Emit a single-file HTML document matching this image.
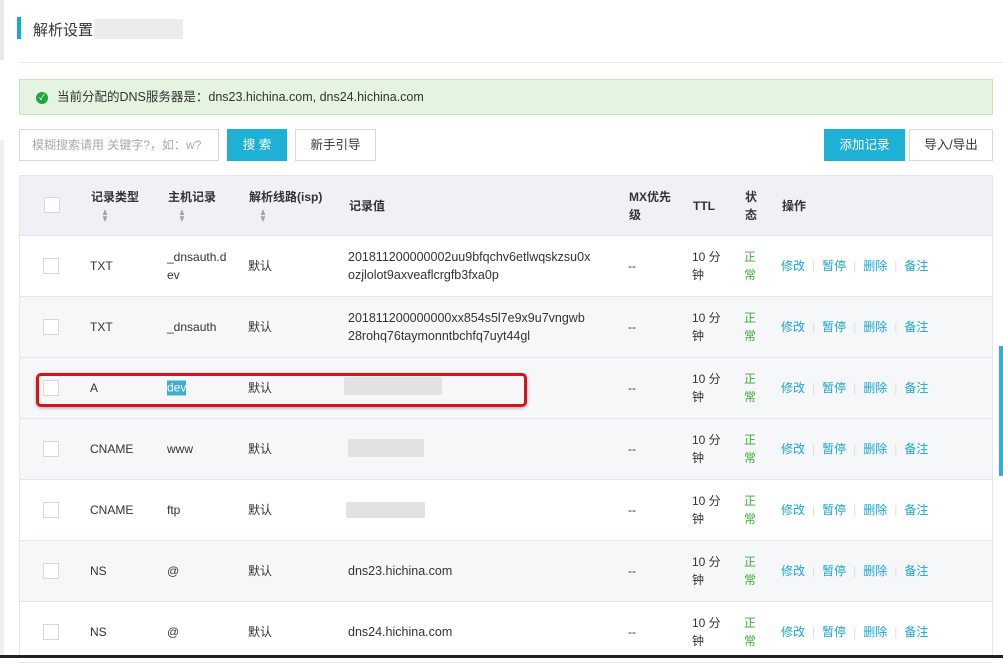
<!DOCTYPE html>
<html><head><meta charset="utf-8"><style>
*{box-sizing:border-box;margin:0;padding:0}
body{width:1003px;height:658px;overflow:hidden;background:#fff;font-family:"Liberation Sans","Noto Sans CJK SC",sans-serif;font-size:12px;color:#333;position:relative}
.abs{position:absolute}
.row{position:absolute;left:19px;width:974px;height:61px;border-bottom:1px solid #e3e6eb}
.cell{position:absolute;top:50%;transform:translateY(-50%);line-height:18px}
.cb{position:absolute;left:24px;top:22px;width:16px;height:16px;border:1px solid #d5d8dc;background:#fff}
.op{color:#1ba8ce}
.sep{color:#dcdfe3;margin:0 7px}
.blur{position:absolute;background:#e2e2e2;height:18px;border-radius:2px}
.sort{color:#a0a4aa;font-size:10px;line-height:7px;margin-left:10px;margin-top:4px;transform:scaleX(.8);transform-origin:left}
</style></head><body>
<div class="abs" style="left:0;top:0;width:4px;height:60px;background:#e8eaee"></div>
<div class="abs" style="left:0;top:140px;width:4px;height:518px;background:#eef0f3"></div>
<div class="abs" style="left:17px;top:17px;width:4px;height:22px;background:#1aa9d4"></div>
<div class="abs" style="left:33px;top:19px;font-size:15px;color:#333">解析设置</div>
<div class="abs" style="left:94px;top:19px;width:89px;height:20px;background:#ececec"></div>
<div class="abs" style="left:19px;top:62px;width:984px;height:1px;background:#e6e8eb"></div>
<div class="abs" style="left:19px;top:79px;width:974px;height:36px;background:#e5f3e1;border:1px solid #c7e5be"></div>
<div class="abs" style="left:36px;top:92px;width:12px;height:12px;border-radius:50%;background:#22a53e;color:#fff;font-size:8px;line-height:12px;text-align:center">✓</div>
<div class="abs" style="left:57px;top:88px;font-size:12.5px;color:#333;line-height:18px">当前分配的DNS服务器是：dns23.hichina.com, dns24.hichina.com</div>
<div class="abs" style="left:19px;top:129px;width:200px;height:32px;border:1px solid #d5d8dc;padding-left:12px;line-height:30px;color:#aaa">模糊搜索请用 关键字?，如：w?</div>
<div class="abs" style="left:227px;top:129px;width:60px;height:32px;background:#1fb0d6;color:#fff;text-align:center;line-height:32px;font-size:12.5px">搜 索</div>
<div class="abs" style="left:295px;top:129px;width:81px;height:32px;border:1px solid #d5d8dc;text-align:center;line-height:30px;font-size:12.5px">新手引导</div>
<div class="abs" style="left:824px;top:129px;width:81px;height:32px;background:#1fb0d6;color:#fff;text-align:center;line-height:32px;font-size:12.5px">添加记录</div>
<div class="abs" style="left:909px;top:129px;width:84px;height:32px;border:1px solid #d5d8dc;text-align:center;line-height:30px;font-size:12.5px">导入/导出</div>

<div class="row" style="top:175px;height:61px;background:#eff1f6;border:1px solid #e3e6eb;font-weight:bold;color:#333">
<div class="cb" style="top:21px"></div>
<div class="abs" style="left:71px;top:12px">记录类型<div class="sort">▲<br>▼</div></div>
<div class="abs" style="left:148px;top:12px">主机记录<div class="sort">▲<br>▼</div></div>
<div class="abs" style="left:229px;top:12px">解析线路(isp)<div class="sort">▲<br>▼</div></div>
<div class="cell" style="left:329px">记录值</div>
<div class="cell" style="left:609px">MX优先<br>级</div>
<div class="cell" style="left:673px">TTL</div>
<div class="cell" style="left:725px">状<br>态</div>
<div class="cell" style="left:762px">操作</div>
</div>

<div class="row" style="top:236px;background:#fff"><div class="cb"></div><div class="cell" style="left:71px">TXT</div><div class="cell" style="left:148px">_dnsauth.d<br>ev</div><div class="cell" style="left:229px">默认</div><div class="cell" style="left:329px;font-size:12.5px">201811200000002uu9bfqchv6etlwqskzsu0x<br>ozjlolot9axveaflcrgfb3fxa0p</div><div class="cell" style="left:609px">--</div><div class="cell" style="left:673px">10 分<br>钟</div><div class="cell" style="left:725px;color:#3cb034">正<br>常</div><div class="cell op" style="left:762px">修改<span class="sep">|</span>暂停<span class="sep">|</span>删除<span class="sep">|</span>备注</div></div>
<div class="row" style="top:297px;background:#f6f7f9"><div class="cb"></div><div class="cell" style="left:71px">TXT</div><div class="cell" style="left:148px">_dnsauth</div><div class="cell" style="left:229px">默认</div><div class="cell" style="left:329px;font-size:12.5px">201811200000000xx854s5l7e9x9u7vngwb<br>28rohq76taymonntbchfq7uyt44gl</div><div class="cell" style="left:609px">--</div><div class="cell" style="left:673px">10 分<br>钟</div><div class="cell" style="left:725px;color:#3cb034">正<br>常</div><div class="cell op" style="left:762px">修改<span class="sep">|</span>暂停<span class="sep">|</span>删除<span class="sep">|</span>备注</div></div>
<div class="row" style="top:358px;background:#f6f7f9"><div class="cb"></div><div class="cell" style="left:71px">A</div><div class="cell" style="left:148px;background:#3eaed6;color:#fff;line-height:15px">dev</div><div class="cell" style="left:229px">默认</div><div class="blur" style="left:325px;top:19px;width:98px"></div><div class="cell" style="left:609px">--</div><div class="cell" style="left:673px">10 分<br>钟</div><div class="cell" style="left:725px;color:#3cb034">正<br>常</div><div class="cell op" style="left:762px">修改<span class="sep">|</span>暂停<span class="sep">|</span>删除<span class="sep">|</span>备注</div></div>
<div class="row" style="top:419px;background:#f6f7f9"><div class="cb"></div><div class="cell" style="left:71px">CNAME</div><div class="cell" style="left:148px">www</div><div class="cell" style="left:229px">默认</div><div class="blur" style="left:329px;top:20px;width:76px"></div><div class="cell" style="left:609px">--</div><div class="cell" style="left:673px">10 分<br>钟</div><div class="cell" style="left:725px;color:#3cb034">正<br>常</div><div class="cell op" style="left:762px">修改<span class="sep">|</span>暂停<span class="sep">|</span>删除<span class="sep">|</span>备注</div></div>
<div class="row" style="top:480px;background:#fff"><div class="cb"></div><div class="cell" style="left:71px">CNAME</div><div class="cell" style="left:148px">ftp</div><div class="cell" style="left:229px">默认</div><div class="blur" style="left:327px;top:22px;width:79px;height:16px"></div><div class="cell" style="left:609px">--</div><div class="cell" style="left:673px">10 分<br>钟</div><div class="cell" style="left:725px;color:#3cb034">正<br>常</div><div class="cell op" style="left:762px">修改<span class="sep">|</span>暂停<span class="sep">|</span>删除<span class="sep">|</span>备注</div></div>
<div class="row" style="top:541px;background:#f6f7f9"><div class="cb"></div><div class="cell" style="left:71px">NS</div><div class="cell" style="left:148px">@</div><div class="cell" style="left:229px">默认</div><div class="cell" style="left:329px;font-size:12.5px">dns23.hichina.com</div><div class="cell" style="left:609px">--</div><div class="cell" style="left:673px">10 分<br>钟</div><div class="cell" style="left:725px;color:#3cb034">正<br>常</div><div class="cell op" style="left:762px">修改<span class="sep">|</span>暂停<span class="sep">|</span>删除<span class="sep">|</span>备注</div></div>
<div class="row" style="top:602px;background:#fff"><div class="cb"></div><div class="cell" style="left:71px">NS</div><div class="cell" style="left:148px">@</div><div class="cell" style="left:229px">默认</div><div class="cell" style="left:329px;font-size:12.5px">dns24.hichina.com</div><div class="cell" style="left:609px">--</div><div class="cell" style="left:673px">10 分<br>钟</div><div class="cell" style="left:725px;color:#3cb034">正<br>常</div><div class="cell op" style="left:762px">修改<span class="sep">|</span>暂停<span class="sep">|</span>删除<span class="sep">|</span>备注</div></div>
<div class="abs" style="left:19px;top:236px;width:1px;height:422px;background:#e3e6eb"></div>
<div class="abs" style="left:992px;top:236px;width:1px;height:422px;background:#e3e6eb"></div>

<div class="abs" style="left:36px;top:373px;width:491px;height:34px;border:3px solid #d4141b;border-radius:5px;box-shadow:0 1px 3px rgba(0,0,0,.35)"></div>
<div class="abs" style="left:999px;top:346px;width:4px;height:130px;background:#2ab3d6"></div>
<div class="abs" style="left:0;top:655px;width:1003px;height:3px;background:#222"></div>
</body></html>
